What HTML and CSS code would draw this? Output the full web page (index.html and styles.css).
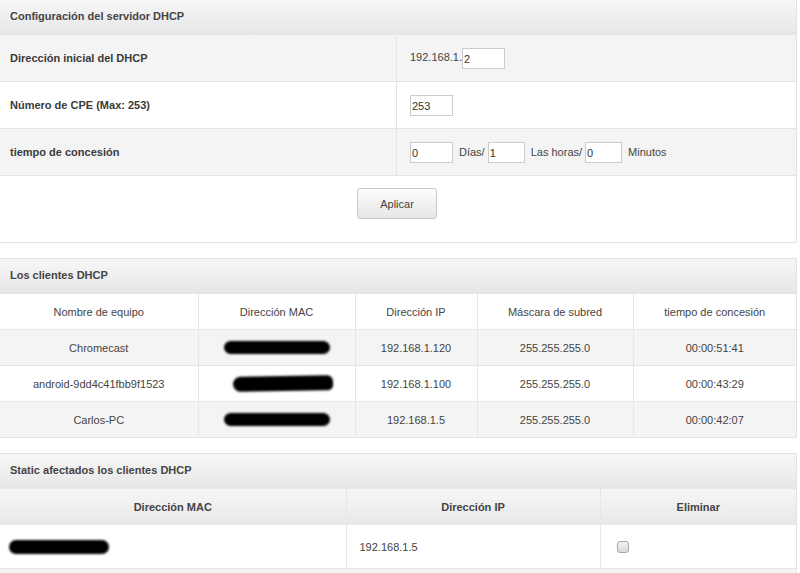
FILE: index.html
```html
<!DOCTYPE html>
<html lang="es">
<head>
  <meta charset="UTF-8" />
  <title>Configuración del servidor DHCP</title>
  <link rel="stylesheet" href="styles.css">
</head>
<body>

<div class="panel first">
  <div class="panel-title">Configuración del servidor DHCP</div>
  <table class="form-table">
    <tr class="alt">
      <td class="label">Dirección inicial del DHCP</td>
      <td class="value">192.168.1.<input class="txt" type="text" value="2"></td>
    </tr>
    <tr>
      <td class="label">Número de CPE (Max: 253)</td>
      <td class="value"><input class="txt" type="text" value="253"></td>
    </tr>
    <tr class="alt">
      <td class="label">tiempo de concesión</td>
      <td class="value">
        <input class="txt" type="text" value="0"><span class="unit">Días/</span><input class="txt small" type="text" value="1"><span class="unit">Las horas/</span><input class="txt small" type="text" value="0"><span class="unit">Minutos</span>
      </td>
    </tr>
  </table>
  <div class="actions">
    <button class="btn" type="button">Aplicar</button>
  </div>
</div>

<div class="panel">
  <div class="panel-title">Los clientes DHCP</div>
  <table class="grid clients">
    <colgroup>
      <col style="width:198px">
      <col style="width:157px">
      <col style="width:122px">
      <col style="width:156px">
      <col>
    </colgroup>
    <tr class="head">
      <td>Nombre de equipo</td>
      <td>Dirección MAC</td>
      <td>Dirección IP</td>
      <td>Máscara de subred</td>
      <td>tiempo de concesión</td>
    </tr>
    <tr class="alt">
      <td>Chromecast</td>
      <td><span class="redact"></span></td>
      <td>192.168.1.120</td>
      <td>255.255.255.0</td>
      <td>00:00:51:41</td>
    </tr>
    <tr>
      <td>android-9dd4c41fbb9f1523</td>
      <td><span class="redact tilt"></span></td>
      <td>192.168.1.100</td>
      <td>255.255.255.0</td>
      <td>00:00:43:29</td>
    </tr>
    <tr class="alt">
      <td>Carlos-PC</td>
      <td><span class="redact"></span></td>
      <td>192.168.1.5</td>
      <td>255.255.255.0</td>
      <td>00:00:42:07</td>
    </tr>
  </table>
</div>

<div class="panel last">
  <div class="panel-title">Static afectados los clientes DHCP</div>
  <table class="grid static">
    <colgroup>
      <col style="width:346px">
      <col style="width:254px">
      <col>
    </colgroup>
    <tr class="head bold">
      <td>Dirección MAC</td>
      <td>Dirección IP</td>
      <td>Eliminar</td>
    </tr>
    <tr class="body">
      <td class="left"><span class="redact short"></span></td>
      <td class="left ip">192.168.1.5</td>
      <td class="left chk"><input type="checkbox" class="box"></td>
    </tr>
  </table>
  <div class="next-row"></div>
</div>

</body>
</html>
```

FILE: styles.css
```css
body {
  margin: 0;
  font-family: "Liberation Sans", Arial, sans-serif;
  font-size: 11px;
  color: #444;
  background: #fff;
}
.panel {
  width: 796px;
  border-top: 1px solid #e2e2e2;
  border-right: 1px solid #e2e2e2;
  margin-top: 15px;
}
.panel.first {
  margin-top: -1px;
}
.panel-title {
  height: 35px;
  line-height: 33px;
  padding-left: 10px;
  font-weight: bold;
  color: #444;
  background: linear-gradient(#f7f7f7, #e6e6e6);
}
table {
  border-collapse: collapse;
  width: 100%;
  table-layout: fixed;
}
td {
  padding: 0;
}
.form-table td {
  height: 46px;
  border-bottom: 1px solid #e4e4e4;
  vertical-align: middle;
}
.form-table tr {
  background: #fff;
}
.form-table tr.alt {
  background: #f4f4f4;
}
.form-table .label {
  width: 386px;
  padding-left: 10px;
  border-right: 1px solid #e4e4e4;
  font-weight: bold;
  color: #3a3a3a;
}
.form-table .value {
  padding-left: 13px;
  color: #444;
}
.txt {
  box-sizing: border-box;
  width: 43px;
  height: 21px;
  margin: 0;
  padding: 2px 1px 0;
  border: 1px solid #ccc;
  background: #fff;
  font-family: "Liberation Sans", Arial, sans-serif;
  font-size: 11px;
  color: #333;
  vertical-align: middle;
}
.txt.small {
  width: 37px;
}
.unit {
  display: inline-block;
  margin: 0 3px 0 6px;
  vertical-align: middle;
}
.actions {
  height: 54px;
  padding-top: 12px;
  text-align: center;
  border-bottom: 1px solid #e4e4e4;
}
.btn {
  width: 80px;
  height: 31px;
  border: 1px solid #c8c8c8;
  border-radius: 3px;
  background: linear-gradient(#fcfcfc, #e6e6e6);
  font-family: "Liberation Sans", Arial, sans-serif;
  font-size: 11px;
  color: #444;
  margin-left: -2px;
}
.grid td {
  height: 35px;
  text-align: center;
  vertical-align: middle;
  border-bottom: 1px solid #e6e6e6;
  border-right: 1px solid #e6e6e6;
}
.grid td:last-child {
  border-right: 0;
}
.grid tr {
  background: #fff;
}
.grid tr.alt {
  background: #f4f4f4;
}
.grid tr.head.bold {
  background: linear-gradient(#f6f6f6, #e8e8e8);
}
.grid tr.head.bold td {
  height: 36px;
  font-weight: bold;
  color: #444;
  border-bottom: 0;
}
.static tr.body td {
  height: 43px;
}
.static td.left {
  text-align: left;
}
.static td.ip {
  padding-left: 13px;
}
.static td.chk {
  padding-left: 16px;
}
.redact {
  display: inline-block;
  width: 106px;
  height: 13px;
  border-radius: 7px;
  background: #000;
  filter: blur(1.2px);
  vertical-align: middle;
}
.redact.tilt {
  width: 100px;
  height: 15px;
  margin-left: 12px;
  border-radius: 9px 7px 6px 9px;
  transform: rotate(-1deg);
}
.redact.short {
  width: 100px;
  height: 14px;
  margin-left: 9px;
}
.box {
  appearance: none;
  -webkit-appearance: none;
  width: 12px;
  height: 12px;
  margin: 0;
  border: 1px solid #a8a8a8;
  border-radius: 3px;
  background: linear-gradient(#f4f4f4, #d9d9d9);
  vertical-align: middle;
}
.next-row {
  height: 10px;
  background: #f4f4f4;
}
```
